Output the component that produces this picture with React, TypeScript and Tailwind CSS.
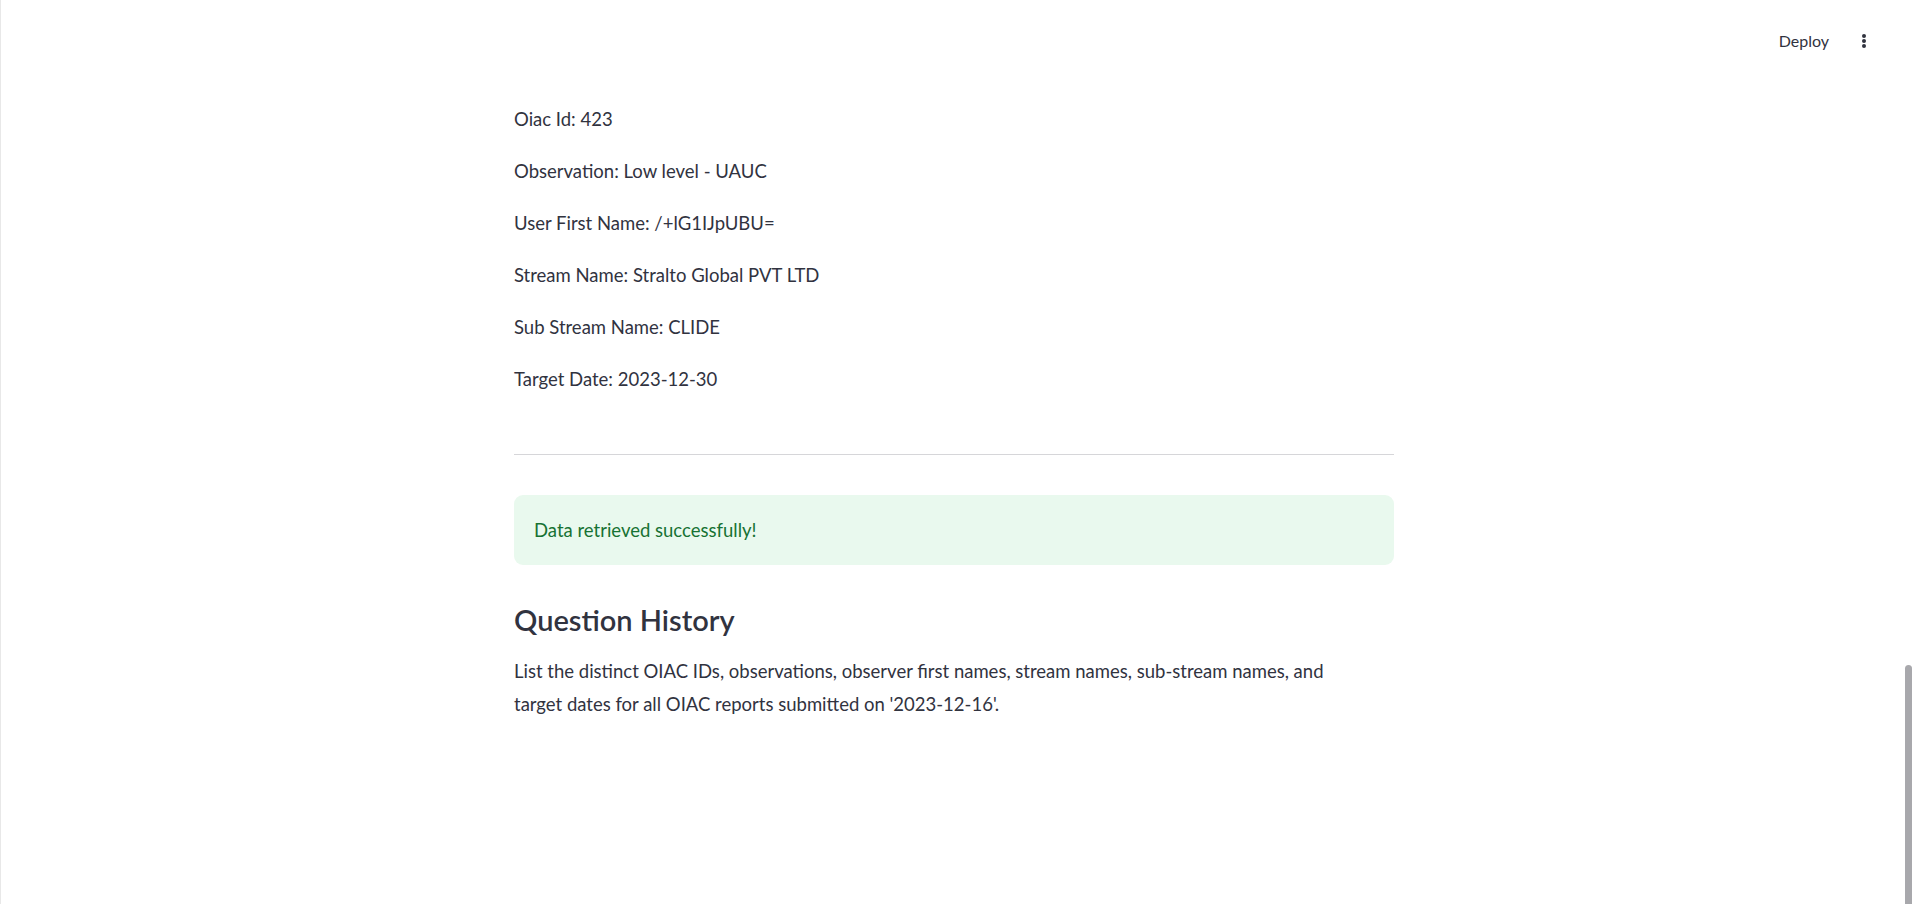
const fields = [
  { label: 'Oiac Id', value: '423' },
  { label: 'Observation', value: 'Low level - UAUC' },
  { label: 'User First Name', value: '/+lG1IJpUBU=' },
  { label: 'Stream Name', value: 'Stralto Global PVT LTD' },
  { label: 'Sub Stream Name', value: 'CLIDE' },
  { label: 'Target Date', value: '2023-12-30' },
]

export default function App() {
  return (
    <div className="flex h-[904px] w-full overflow-hidden border-l border-[#e8e8e8] bg-white font-['Lato',sans-serif] text-[#31333f]">
      <div className="flex min-w-0 flex-1 flex-col pl-[3px]">
        {/* Header */}
        <header className="flex h-[82px] shrink-0 items-center justify-end gap-[33px] pr-[38px]">
          <button className="text-[16px] leading-none text-[#31333f]">Deploy</button>
          <div className="flex w-[4px] flex-col items-center gap-[1px]">
            <span className="h-[4px] w-[4px] rounded-full bg-[#31333f]" />
            <span className="h-[4px] w-[4px] rounded-full bg-[#31333f]" />
            <span className="h-[4px] w-[4px] rounded-full bg-[#31333f]" />
          </div>
        </header>

        {/* Main Content */}
        <main className="mx-auto flex w-[880px] flex-col pt-[21px]">
          <div className="flex flex-col gap-[20px]">
            {fields.map(f => (
              <p key={f.label} className="text-[18.5px] leading-[32px]">
                {f.label}: {f.value}
              </p>
            ))}
          </div>

          <hr className="mt-[59px] border-0 border-t border-[#d6d6d9]" />

          <div className="mt-[40px] rounded-[9px] bg-[#e9f9ee] px-[20px] py-[19px]">
            <p className="text-[18.5px] leading-[32px] text-[#177233]">Data retrieved successfully!</p>
          </div>

          <h3 className="mt-[37px] text-[29px] font-semibold leading-[35px] text-[#31333f]">Question History</h3>

          <p className="mt-[18px] text-[18.5px] leading-[33px]">
            List the distinct OIAC IDs, observations, observer first names, stream names, sub-stream names, and
            <br />
            target dates for all OIAC reports submitted on '2023-12-16'.
          </p>
        </main>
      </div>

      {/* Scrollbar */}
      <div className="flex w-[8px] shrink-0 flex-col justify-end">
        <div className="ml-auto h-[239px] w-[7px] rounded-t-full bg-[#a8a8ac]" />
      </div>
    </div>
  )
}
